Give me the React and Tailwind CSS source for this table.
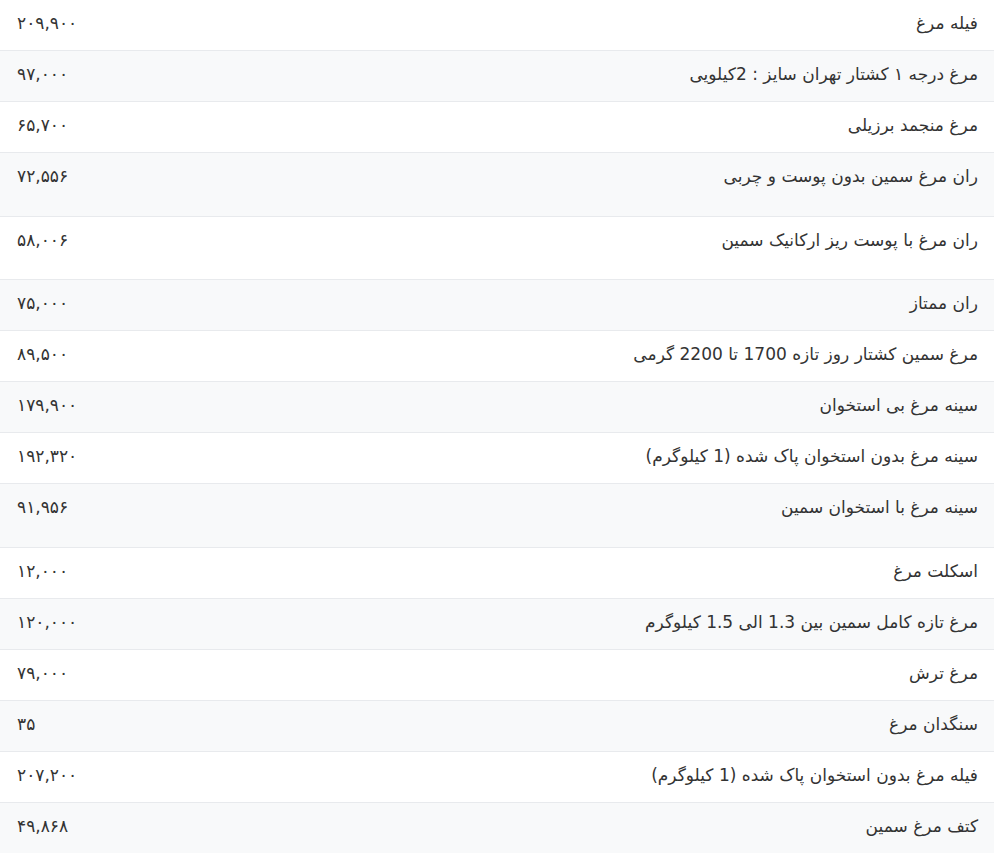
import React from "react";

const items = [
  { name: "فیله مرغ", price: "۲۰۹,۹۰۰" },
  { name: "مرغ درجه ۱ کشتار تهران سایز : 2کیلویی", price: "۹۷,۰۰۰" },
  { name: "مرغ منجمد برزیلی", price: "۶۵,۷۰۰" },
  { name: "ران مرغ سمین بدون پوست و چربی", price: "۷۲,۵۵۶", tall: true },
  { name: "ران مرغ با پوست ریز ارکانیک سمین", price: "۵۸,۰۰۶", tall: true },
  { name: "ران ممتاز", price: "۷۵,۰۰۰" },
  { name: "مرغ سمین کشتار روز تازه 1700 تا 2200 گرمی", price: "۸۹,۵۰۰" },
  { name: "سینه مرغ بی استخوان", price: "۱۷۹,۹۰۰" },
  { name: "سینه مرغ بدون استخوان پاک شده (1 کیلوگرم)", price: "۱۹۲,۳۲۰" },
  { name: "سینه مرغ با استخوان سمین", price: "۹۱,۹۵۶", tall: true },
  { name: "اسکلت مرغ", price: "۱۲,۰۰۰" },
  { name: "مرغ تازه کامل سمین بین 1.3 الی 1.5 کیلوگرم", price: "۱۲۰,۰۰۰" },
  { name: "مرغ ترش", price: "۷۹,۰۰۰" },
  { name: "سنگدان مرغ", price: "۳۵" },
  { name: "فیله مرغ بدون استخوان پاک شده (1 کیلوگرم)", price: "۲۰۷,۲۰۰" },
  { name: "کتف مرغ سمین", price: "۴۹,۸۶۸" },
];

export default function App() {
  return (
    <div
      dir="rtl"
      className="bg-white text-[#333] text-[17px] leading-6 font-['DejaVu_Sans','Noto_Sans_Arabic',sans-serif] -mt-px"
    >
      {items.map((item, i) => (
        <div
          key={i}
          className={`flex justify-between items-start border-t border-[#e8eaed] px-4 pt-[11px] ${
            item.tall ? "h-[63.5px]" : "h-[51px]"
          } ${i % 2 === 1 ? "bg-[#f8f9fa]" : "bg-white"}`}
        >
          <span>{item.name}</span>
          <span dir="ltr" className="pl-px">{item.price}</span>
        </div>
      ))}
    </div>
  );
}
